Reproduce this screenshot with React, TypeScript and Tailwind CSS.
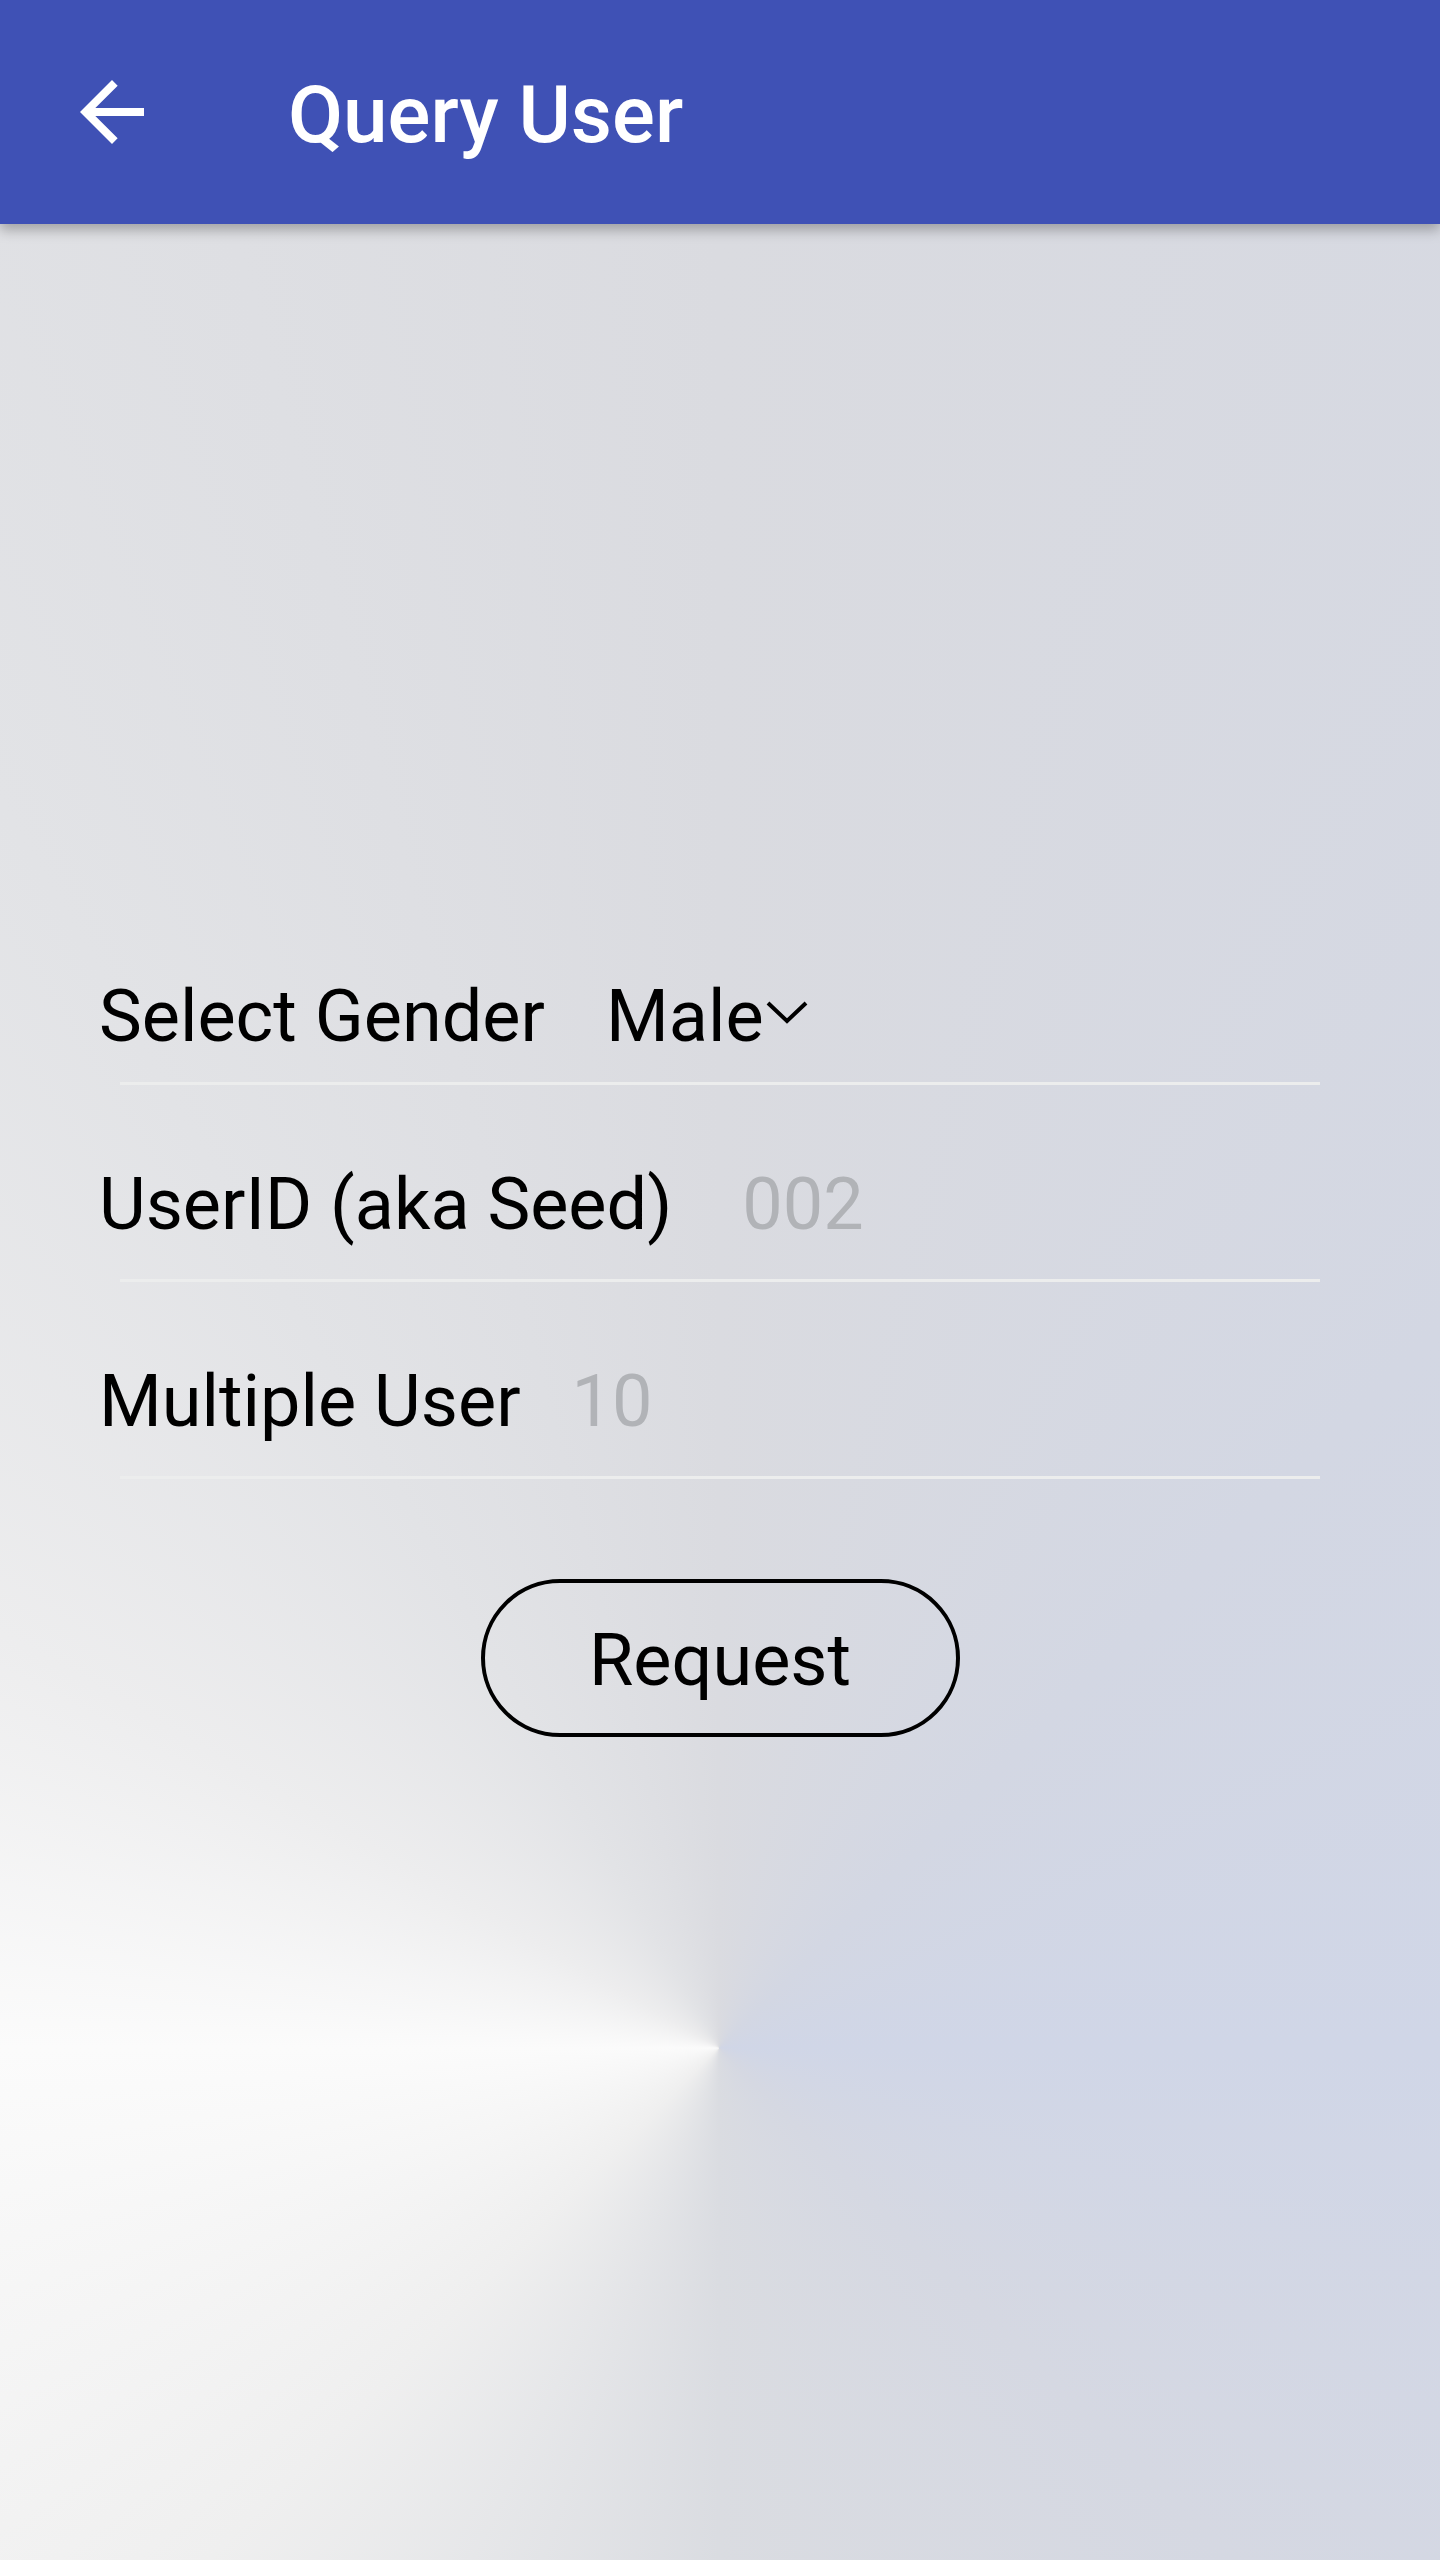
import { useState } from 'react';

const rows = [
  { label: 'UserID (aka Seed)', hint: '002', gap: 'ml-[70px]' },
  { label: 'Multiple User', hint: '10', gap: 'ml-[51px]' },
];

export default function App() {
  const [gender] = useState('Male');

  return (
    <div
      className="min-h-[2560px] w-full bg-[image:conic-gradient(from_0deg_at_719px_2048px,#dadbe0_0deg,#d3d7e3_45deg,#d0d6e7_90deg,#d5d8e2_135deg,#dadce1_180deg,#efefef_225deg,#fbfbfb_270deg,#ededee_300deg,#e2e3e6_330deg,#dadbe0_360deg)] text-black"
      style={{ fontFamily: 'Roboto, "Noto Sans", sans-serif' }}
    >
      {/* Toolbar */}
      <header className="relative z-10 flex h-[224px] items-center bg-[#3f51b5] shadow-[0_6px_12px_rgba(0,0,0,0.28)]">
        <button className="ml-[64px] h-[96px] w-[96px]">
          <svg viewBox="0 0 24 24" className="h-[96px] w-[96px] fill-white">
            <path d="M20 11H7.83l5.59-5.59L12 4l-8 8 8 8 1.41-1.41L7.83 13H20v-2z" />
          </svg>
        </button>
        <h1 className="ml-[128px] mt-[6px] text-[80px] font-medium leading-none text-white">Query User</h1>
      </header>

      <main className="pt-[751px]">
        {/* Gender spinner */}
        <div className="flex h-[84px] items-center px-[99px] text-[72px] leading-[84px]">
          <span>Select Gender</span>
          <span className="ml-[61px]">{gender}</span>
          <svg viewBox="0 0 44 24" className="-mt-[10px] ml-[1px] h-[24px] w-[44px]" fill="none" stroke="#000" strokeWidth="4">
            <polyline points="3,3 22,21 41,3" />
          </svg>
        </div>
        <div className="mx-[120px] mt-[23px] h-[3px] bg-[#eceded]" />

        {rows.map((row) => (
          <div key={row.label} className="mt-[78px]">
            <div className="flex h-[84px] items-center px-[99px] text-[72px] leading-[84px]">
              <span>{row.label}</span>
              <span className={`${row.gap} text-[#b1b3b7]`}>{row.hint}</span>
            </div>
            <div className="mx-[120px] mt-[32px] h-[3px] bg-[#eceded]" />
          </div>
        ))}

        <div className="mt-[100px] flex justify-center">
          <button className="h-[158px] w-[479px] rounded-full border-[4px] border-black pt-[6px] text-[72px] leading-none text-black">
            Request
          </button>
        </div>
      </main>
    </div>
  );
}
